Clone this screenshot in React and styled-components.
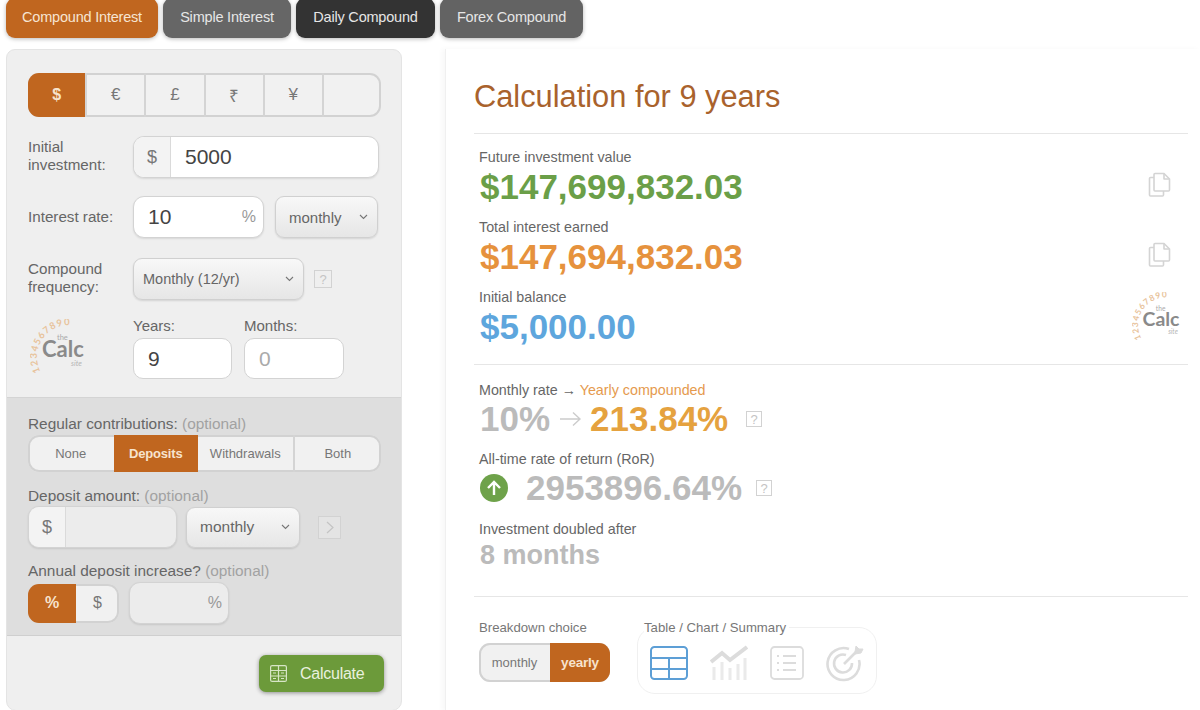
import React from 'react';
import styled, { createGlobalStyle } from 'styled-components';

const GlobalStyle = createGlobalStyle`
  html, body {
    margin: 0;
    padding: 0;
    height: 710px;
    overflow: hidden;
    background: #fff;
    font-family: "Liberation Sans", Arial, sans-serif;
    color: #666;
  }
  * {
    box-sizing: border-box;
  }
`;

const Page = styled.div`
  width: 1200px;
  height: 710px;
  overflow: hidden;
`;

const TabBar = styled.div`
  display: flex;
  gap: 5px;
  height: 39px;
  margin-top: -2px;
  padding-left: 6px;
`;

const Tab = styled.div`
  width: ${(p) => p.$width}px;
  height: 40px;
  display: flex;
  align-items: center;
  justify-content: center;
  padding-bottom: 2px;
  border-radius: 9px;
  font-size: 14.5px;
  letter-spacing: -0.2px;
  color: ${(p) => (p.$active ? '#f6e4d2' : '#e6e6e6')};
  background: ${(p) => p.$bg};
  box-shadow: 0 1px 4px rgba(0, 0, 0, 0.28);
`;

const Main = styled.div`
  display: flex;
  margin-top: 12px;
  padding-left: 6px;
  gap: 43px;
`;

const LeftPanel = styled.div`
  width: 396px;
  height: 662px;
  background: #efefef;
  border: 1px solid #e4e4e4;
  border-radius: 9px 9px 10px 10px;
  overflow: hidden;
`;

const TopSection = styled.div`
  height: 347px;
  padding: 23px 21px 0;
`;

const Segments = styled.div`
  display: flex;
  height: ${(p) => p.$height}px;
  width: ${(p) => p.$width}px;
  border-radius: 11px;
  overflow: hidden;
  background: #f1f1f1;
  box-shadow: inset 0 0 0 2px #d2d2d2;
`;

const Segment = styled.div`
  flex: ${(p) => p.$flex || 1};
  display: flex;
  align-items: center;
  justify-content: center;
  font-size: ${(p) => p.$size || 13}px;
  font-weight: ${(p) => (p.$active ? 700 : 400)};
  letter-spacing: ${(p) => (p.$active ? '-0.2px' : '0')};
  color: ${(p) => (p.$active ? '#f7e3cd' : '#777')};
  background: ${(p) => (p.$active ? '#c0661f' : 'transparent')};
  border-left: ${(p) => (p.$divider ? '2px solid #d4d4d4' : 'none')};
`;

const FormRow = styled.div`
  display: flex;
  align-items: center;
  margin-top: ${(p) => p.$top}px;
`;

const FieldLabel = styled.div`
  width: 105px;
  flex: none;
  padding-bottom: ${(p) => (p.$multi ? 2 : 0)}px;
  font-size: 15.2px;
  line-height: 18px;
  color: #666;
`;

const InputGroup = styled.div`
  display: flex;
  align-items: center;
  width: ${(p) => p.$width}px;
  height: ${(p) => p.$height || 42}px;
  margin-left: ${(p) => p.$left || 0}px;
  border: 1px solid #d3d3d3;
  border-radius: 11px;
  background: ${(p) => p.$bg || '#fff'};
  box-shadow: 0 1px 2px rgba(0, 0, 0, 0.1);
  overflow: hidden;
`;

const Addon = styled.div`
  width: 37px;
  height: 100%;
  flex: none;
  display: flex;
  align-items: center;
  justify-content: center;
  font-size: 18px;
  color: #777;
  background: #f3f3f3;
  border-right: 1px solid #dadada;
`;

const InputText = styled.div`
  flex: 1;
  padding-left: ${(p) => p.$pad || 14}px;
  font-size: 21px;
  color: ${(p) => (p.$muted ? '#aaa' : '#444')};
`;

const Suffix = styled.span`
  padding-right: ${(p) => p.$pad || 7}px;
  font-size: 16px;
  color: #999;
`;

const Select = styled.div`
  display: flex;
  align-items: center;
  justify-content: space-between;
  width: ${(p) => p.$width}px;
  height: ${(p) => p.$height}px;
  margin-left: ${(p) => p.$left || 0}px;
  padding: 0 9px 0 ${(p) => p.$pad || 13}px;
  font-size: ${(p) => p.$size || 15}px;
  color: #666;
  border: 1px solid #d0d0d0;
  border-radius: 9px;
  background: linear-gradient(#f8f8f8, #e6e6e6);
  box-shadow: 0 1px 2px rgba(0, 0, 0, 0.12);
`;

const HelpBox = styled.div`
  width: ${(p) => p.$box || 18}px;
  height: ${(p) => p.$box || 18}px;
  margin-left: ${(p) => p.$left}px;
  flex: none;
  display: flex;
  align-items: center;
  justify-content: center;
  font-size: 13px;
  font-weight: 400;
  color: #c4c4c4;
  border: 1px solid #d2d2d2;
  background: ${(p) => p.$bg || 'transparent'};
`;

const DurationRow = styled.div`
  display: flex;
  align-items: flex-end;
  margin-top: 18px;
`;

const LogoSlot = styled.div`
  width: 105px;
  flex: none;
  display: flex;
  padding-left: 2px;
`;

const DurationField = styled.div`
  width: ${(p) => p.$width}px;
  margin-right: ${(p) => p.$right || 0}px;
`;

const SmallLabel = styled.div`
  font-size: 15px;
  line-height: 16px;
  margin-bottom: 4px;
  color: #666;
`;

const NumberBox = styled.div`
  height: 41px;
  padding-left: 14px;
  display: flex;
  align-items: center;
  font-size: 21px;
  color: ${(p) => (p.$muted ? '#aaa' : '#444')};
  background: #fff;
  border: 1px solid #d3d3d3;
  border-radius: 10px;
`;

const MiddleSection = styled.div`
  height: 239px;
  padding: 18px 21px 0;
  background: #dedede;
  border-top: 1px solid #d4d4d4;
  border-bottom: 1px solid #cfcfcf;
`;

const GroupLabel = styled.div`
  font-size: 15.4px;
  line-height: 16px;
  margin-top: ${(p) => p.$top || 0}px;
  margin-bottom: ${(p) => p.$gap || 3}px;
  color: #666;
`;

const Optional = styled.span`
  color: #a2a2a2;
`;

const InlineRow = styled.div`
  display: flex;
  align-items: center;
`;

const Footer = styled.div`
  display: flex;
  justify-content: flex-end;
  padding: 19px 17px 0 0;
`;

const CalcButton = styled.div`
  width: 125px;
  height: 37px;
  display: flex;
  align-items: center;
  gap: 13px;
  padding-left: 11px;
  font-size: 16px;
  letter-spacing: -0.25px;
  color: #e9f1df;
  background: #6c9a3a;
  border-radius: 7px;
  box-shadow: 0 1px 4px rgba(0, 0, 0, 0.4);
`;

const RightPanel = styled.div`
  flex: 1;
  height: 662px;
  padding: 31px 12px 0 28px;
  border-left: 1px solid #f0f0f0;
  box-shadow: -3px 0 5px rgba(0, 0, 0, 0.03);
`;

const Title = styled.h1`
  margin: 0;
  font-size: 30.8px;
  line-height: 34px;
  font-weight: 400;
  color: #a9622c;
`;

const Divider = styled.hr`
  margin: ${(p) => p.$top}px 0 ${(p) => p.$bottom}px;
  border: none;
  border-top: 1px solid #e6e6e6;
`;

const ResultRow = styled.div`
  display: flex;
  justify-content: space-between;
  align-items: flex-start;
  height: 70px;
  padding-left: 5px;
`;

const MetricLabel = styled.div`
  font-size: 14.3px;
  line-height: 16px;
  color: #666;
`;

const Accent = styled.span`
  color: #e59a4e;
`;

const Amount = styled.div`
  margin-left: 1px;
  font-size: 35px;
  line-height: 44px;
  font-weight: 700;
  color: ${(p) => p.$color};
`;

const CopyIcon = styled.div`
  display: flex;
  margin: 23px 16px 0 0;
`;

const LogoCorner = styled.div`
  display: flex;
  margin: 3px 3px 0 0;
`;

const RateBlock = styled.div`
  padding-left: 5px;
  height: ${(p) => p.$height}px;
`;

const RateLine = styled.div`
  display: flex;
  align-items: center;
  height: 44px;
  margin: -1px 0 0 1px;
  font-size: 35px;
  font-weight: 700;
`;

const RateValue = styled.span`
  color: ${(p) => p.$color || '#bbb'};
`;

const Arrow = styled.span`
  margin: 0 8px 0 9px;
  display: flex;
`;

const UpBadge = styled.div`
  width: 28px;
  height: 28px;
  margin-right: 18px;
  display: flex;
  align-items: center;
  justify-content: center;
  border-radius: 50%;
  background: #6ea24a;
`;

const Doubled = styled.div`
  font-size: 27px;
  line-height: 30px;
  margin: 3px 0 0 1px;
  font-weight: 700;
  color: #bbb;
`;

const BreakdownRow = styled.div`
  display: flex;
  padding-left: 5px;
`;

const BreakdownChoice = styled.div`
  width: 158px;
  flex: none;
`;

const BreakdownLabel = styled.div`
  font-size: 13.2px;
  line-height: 14px;
  margin-bottom: 8px;
  color: #777;
`;

const ViewFieldset = styled.fieldset`
  width: 240px;
  height: 74px;
  margin: -1px 0 0;
  padding: 0 0 0 12px;
  display: flex;
  align-items: flex-start;
  gap: 22px;
  border: 1px solid #f0f0f0;
  border-radius: 18px;
  min-width: 0;
`;

const ViewLegend = styled.legend`
  padding: 0 3px 0 0;
  margin-left: -6px;
  font-size: 13.2px;
  color: #777;
`;

const ViewIcon = styled.div`
  display: flex;
  margin-top: ${(p) => p.$top || 11}px;
`;

const Chevron = () => (
  <svg width="9" height="6" viewBox="0 0 9 6" fill="none" stroke="#777" strokeWidth="1.1">
    <path d="M1 1l3.5 3.5L8 1" />
  </svg>
);

// logo: digit arc around the wordmark
const CalcLogo = ({ size = 60 }) => (
  <svg width={size} height={size} viewBox="0 0 60 60" fontFamily="Lato, sans-serif">
    <defs>
      <path id="logo-arc" d="M10.5 52.7A32 32 0 0 1 50 8" fill="none" />
    </defs>
    <text fontSize="9.5" fontWeight="700" fill="#e8c39b" letterSpacing="1.2">
      <textPath href="#logo-arc">1234567890</textPath>
    </text>
    <text x="27" y="21" fontSize="7.5" fill="#aaa">the</text>
    <text x="12" y="38" fontSize="22" fontWeight="700" fill="#8a8a8a">Calc</text>
    <text x="41" y="47" fontSize="7.5" fontStyle="italic" fill="#b5b5b5">site</text>
  </svg>
);

const CopyGlyph = () => (
  <svg width="24" height="25" viewBox="0 0 24 25" fill="none" stroke="#d4d4d4" strokeWidth="1.6" strokeLinejoin="round">
    <path d="M7 1.5h9l5.5 5.5v11a1 1 0 0 1-1 1H7a1 1 0 0 1-1-1V2.5a1 1 0 0 1 1-1z" />
    <path d="M16 1.5V7h5.5" />
    <path d="M6 5.5H2.5a1 1 0 0 0-1 1V23a1 1 0 0 0 1 1h12a1 1 0 0 0 1-1v-4" />
  </svg>
);

const TableGlyph = () => (
  <svg width="38" height="34" viewBox="0 0 38 34" fill="none" stroke="#5d9fd6" strokeWidth="2">
    <rect x="1" y="1" width="36" height="32" rx="3.5" />
    <path d="M1 12h36M1 23h36M19 12v21" />
  </svg>
);

const ChartGlyph = () => (
  <svg width="38" height="36" viewBox="0 0 38 36" fill="none" stroke="#dcdcdc">
    <path d="M1 17l11-9 8 7L37 2" strokeWidth="4" />
    <path d="M4 22v13M12 17v18M20 23v12M28 19v16M35 13v22" strokeWidth="3" stroke="#eaeaea" />
  </svg>
);

const ListGlyph = () => (
  <svg width="34" height="34" viewBox="0 0 34 34" fill="none" stroke="#dcdcdc" strokeWidth="1.8">
    <rect x="1" y="1" width="32" height="32" rx="3.5" />
    <path d="M13 10h13M13 17h13M13 24h13" />
    <path d="M7 10h2M7 17h2M7 24h2" />
  </svg>
);

const TargetGlyph = () => (
  <svg width="40" height="38" viewBox="0 0 40 38" fill="none" stroke="#dcdcdc" strokeWidth="2.6">
    <path d="M33 16a16 16 0 1 1-10-11" />
    <path d="M26 19a9 9 0 1 1-6-8" />
    <path d="M18 20L31 7" />
    <path d="M29 8l1-6 3 3 4 0-2 4-6 1z" fill="#dcdcdc" strokeWidth="1" />
  </svg>
);

const CalcGlyph = () => (
  <svg width="17" height="17" viewBox="0 0 17 17" fill="none" stroke="#d7e5c6" strokeWidth="1.2">
    <rect x="0.6" y="0.6" width="15.8" height="15.8" rx="1.5" />
    <path d="M0.6 5.5h15.8M0.6 11h15.8M8.5 0.6v15.8" />
    <path d="M3 13.5h3M11 13.5h3M3 8h3M11 8h3" />
  </svg>
);

const tabs = [
  { label: 'Compound Interest', width: 152, bg: '#c0661f', active: true },
  { label: 'Simple Interest', width: 128, bg: '#666666' },
  { label: 'Daily Compound', width: 139, bg: '#333333' },
  { label: 'Forex Compound', width: 143, bg: '#636363' },
];

const currencies = ['$', '€', '£', '₹', '¥', ''];
const contributions = [
  { label: 'None', flex: 86 },
  { label: 'Deposits', flex: 85 },
  { label: 'Withdrawals', flex: 95 },
  { label: 'Both', flex: 87 },
];

function App() {
  return (
    <Page>
      <GlobalStyle />
      <TabBar>
        {tabs.map((tab) => (
          <Tab key={tab.label} $width={tab.width} $bg={tab.bg} $active={tab.active}>
            {tab.label}
          </Tab>
        ))}
      </TabBar>

      <Main>
        <LeftPanel>
          <TopSection>
            <Segments $width={353} $height={44}>
              {currencies.map((c, i) => (
                <Segment key={i} $active={i === 0} $divider={i > 0} $size={i === 0 ? 16 : 17}>
                  {c}
                </Segment>
              ))}
            </Segments>

            <FormRow $top={19}>
              <FieldLabel $multi>Initial<br />investment:</FieldLabel>
              <InputGroup $width={246}>
                <Addon>$</Addon>
                <InputText>5000</InputText>
              </InputGroup>
            </FormRow>

            <FormRow $top={18}>
              <FieldLabel>Interest rate:</FieldLabel>
              <InputGroup $width={131}>
                <InputText>10</InputText>
                <Suffix>%</Suffix>
              </InputGroup>
              <Select $width={103} $height={42} $left={11}>
                monthly <Chevron />
              </Select>
            </FormRow>

            <FormRow $top={20}>
              <FieldLabel $multi>Compound<br />frequency:</FieldLabel>
              <Select $width={171} $height={42} $pad={9} $size={14.5}>
                Monthly (12/yr) <Chevron />
              </Select>
              <HelpBox $left={10}>?</HelpBox>
            </FormRow>

            <DurationRow>
              <LogoSlot>
                <CalcLogo />
              </LogoSlot>
              <DurationField $width={99} $right={12}>
                <SmallLabel>Years:</SmallLabel>
                <NumberBox>9</NumberBox>
              </DurationField>
              <DurationField $width={100}>
                <SmallLabel>Months:</SmallLabel>
                <NumberBox $muted>0</NumberBox>
              </DurationField>
            </DurationRow>
          </TopSection>

          <MiddleSection>
            <GroupLabel>Regular contributions: <Optional>(optional)</Optional></GroupLabel>
            <Segments $width={353} $height={37}>
              {contributions.map((c, i) => (
                <Segment key={c.label} $flex={c.flex} $active={c.label === 'Deposits'} $divider={i === 3}>
                  {c.label}
                </Segment>
              ))}
            </Segments>

            <GroupLabel $top={16} $gap={2}>Deposit amount: <Optional>(optional)</Optional></GroupLabel>
            <InlineRow>
              <InputGroup $width={149} $bg="#ececec">
                <Addon>$</Addon>
              </InputGroup>
              <Select $width={114} $height={41} $left={9} $size={15.5}>
                monthly <Chevron />
              </Select>
              <HelpBox $left={18} $box={23} $bg="#e4e4e4">
                <svg width="8" height="13" viewBox="0 0 8 13" fill="none" stroke="#c4c4c4" strokeWidth="1.2">
                  <path d="M1 1l6 5.5L1 12" />
                </svg>
              </HelpBox>
            </InlineRow>

            <GroupLabel $top={15}>Annual deposit increase? <Optional>(optional)</Optional></GroupLabel>
            <InlineRow>
              <Segments $width={91} $height={39}>
                <Segment $flex={48} $active $size={16}>%</Segment>
                <Segment $flex={43} $size={16}>$</Segment>
              </Segments>
              <InputGroup $width={100} $height={42} $left={10} $bg="#ececec">
                <InputText />
                <Suffix $pad={6}>%</Suffix>
              </InputGroup>
            </InlineRow>
          </MiddleSection>

          <Footer>
            <CalcButton>
              <CalcGlyph />
              Calculate
            </CalcButton>
          </Footer>
        </LeftPanel>

        <RightPanel>
          <Title>Calculation for 9 years</Title>
          <Divider $top={19} $bottom={15} />

          <ResultRow>
            <div>
              <MetricLabel>Future investment value</MetricLabel>
              <Amount $color="#6b9f48">$147,699,832.03</Amount>
            </div>
            <CopyIcon><CopyGlyph /></CopyIcon>
          </ResultRow>
          <ResultRow>
            <div>
              <MetricLabel>Total interest earned</MetricLabel>
              <Amount $color="#e6923d">$147,694,832.03</Amount>
            </div>
            <CopyIcon><CopyGlyph /></CopyIcon>
          </ResultRow>
          <ResultRow>
            <div>
              <MetricLabel>Initial balance</MetricLabel>
              <Amount $color="#5ea6dd">$5,000.00</Amount>
            </div>
            <LogoCorner><CalcLogo size={53} /></LogoCorner>
          </ResultRow>

          <Divider $top={5} $bottom={17} />

          <RateBlock $height={69}>
            <MetricLabel>Monthly rate → <Accent>Yearly compounded</Accent></MetricLabel>
            <RateLine>
              <RateValue>10%</RateValue>
              <Arrow>
                <svg width="23" height="16" viewBox="0 0 23 16" fill="none" stroke="#ccc" strokeWidth="1.4">
                  <path d="M1 8h20M14 1.5L21 8l-7 6.5" />
                </svg>
              </Arrow>
              <RateValue $color="#e5a23f">213.84%</RateValue>
              <HelpBox $left={18} $box={16} $bg="#fff">?</HelpBox>
            </RateLine>
          </RateBlock>

          <RateBlock $height={70}>
            <MetricLabel>All-time rate of return (RoR)</MetricLabel>
            <RateLine>
              <UpBadge>
                <svg width="16" height="16" viewBox="0 0 16 16" fill="none" stroke="#fff" strokeWidth="2.4">
                  <path d="M8 15V2M2 8l6-6 6 6" />
                </svg>
              </UpBadge>
              <RateValue>2953896.64%</RateValue>
              <HelpBox $left={14} $box={16} $bg="#fff">?</HelpBox>
            </RateLine>
          </RateBlock>

          <RateBlock $height={75}>
            <MetricLabel>Investment doubled after</MetricLabel>
            <Doubled>8 months</Doubled>
          </RateBlock>

          <Divider $top={0} $bottom={24} />

          <BreakdownRow>
            <BreakdownChoice>
              <BreakdownLabel>Breakdown choice</BreakdownLabel>
              <Segments $width={131} $height={39}>
                <Segment $flex={71} $size={13}>monthly</Segment>
                <Segment $flex={60} $active $size={13.5}>yearly</Segment>
              </Segments>
            </BreakdownChoice>
            <ViewFieldset>
              <ViewLegend>Table / Chart / Summary</ViewLegend>
              <ViewIcon><TableGlyph /></ViewIcon>
              <ViewIcon $top={10}><ChartGlyph /></ViewIcon>
              <ViewIcon><ListGlyph /></ViewIcon>
              <ViewIcon $top={9}><TargetGlyph /></ViewIcon>
            </ViewFieldset>
          </BreakdownRow>
        </RightPanel>
      </Main>
    </Page>
  );
}

export default App;
